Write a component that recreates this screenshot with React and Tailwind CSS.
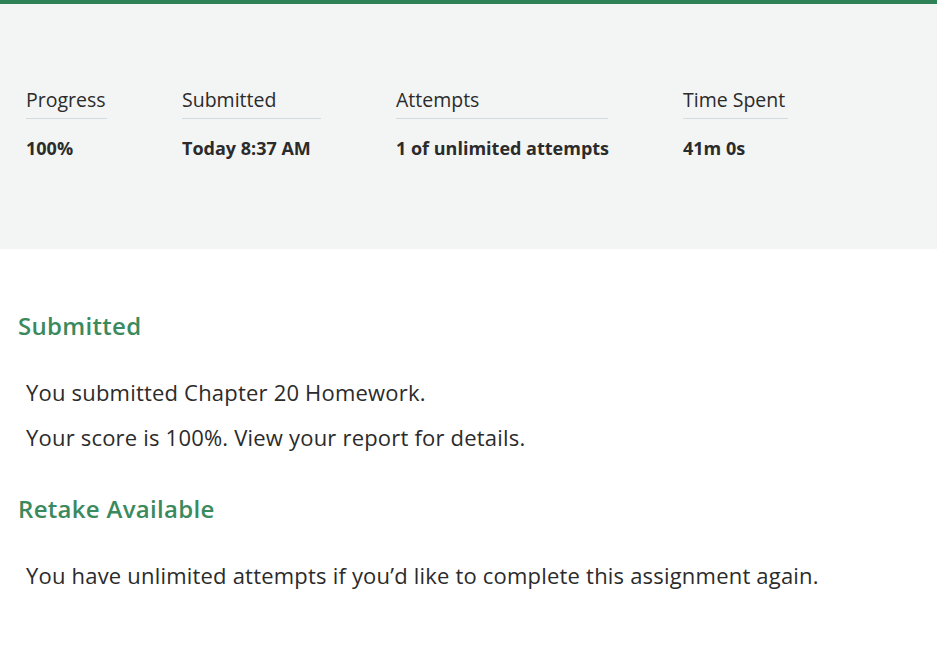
export default function App() {
  const stats = [
    { label: "Progress", value: "100%", w: "w-[81px]" },
    { label: "Submitted", value: "Today 8:37 AM", w: "w-[139px]" },
    { label: "Attempts", value: "1 of unlimited attempts", w: "w-[212px]" },
    { label: "Time Spent", value: "41m 0s", w: "w-[105px]" },
  ];

  return (
    <div className="min-h-screen bg-white text-[#2b2b2b] font-['Open_Sans','Liberation_Sans',sans-serif]">
      <div className="h-1 bg-[#2f8257]"></div>

      {/* summary strip */}
      <div className="h-[245px] bg-[#f3f4f4] pl-[26px] pt-[82px]">
        <div className="flex gap-[75px]">
          {stats.map((s) => (
            <div key={s.label} className={"flex flex-col shrink-0 " + s.w}>
              <div className="text-[19.5px] leading-[28px] pb-[4px] border-b border-[#d3dbe2] whitespace-nowrap">{s.label}</div>
              <div className="text-[18px] leading-[28px] font-bold mt-[15px] whitespace-nowrap">{s.value}</div>
            </div>
          ))}
        </div>
      </div>

      <div className="pl-[18px] pt-[62px]">
        <h2 className="text-[24px] leading-[30px] font-semibold tracking-[0.3px] text-[#3a8a5e]">Submitted</h2>
        <div className="pl-[8px] mt-[36px] text-[22px] leading-[30px] tracking-[0.2px]">
          <p>You submitted Chapter 20 Homework.</p>
          <p className="mt-[15px]">Your score is 100%. View your report for details.</p>
        </div>
        <h2 className="mt-[42px] text-[24px] leading-[30px] font-semibold tracking-[0.3px] text-[#3a8a5e]">Retake Available</h2>
        <p className="pl-[8px] mt-[36px] text-[22px] leading-[30px] tracking-[0.2px]">
          You have unlimited attempts if you’d like to complete this assignment again.
        </p>
      </div>
    </div>
  );
}
